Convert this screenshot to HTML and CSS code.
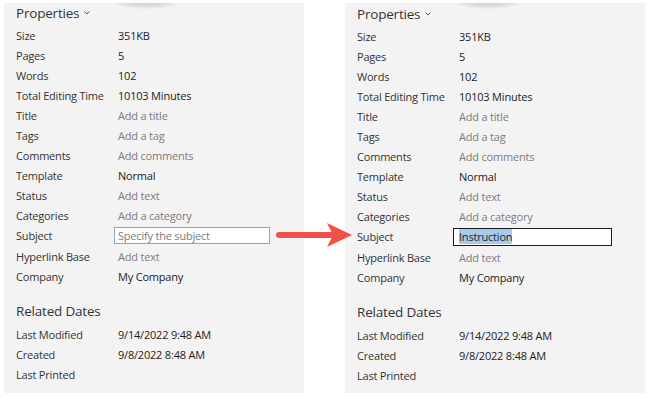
FILE: index.html
```html
<!DOCTYPE html>
<html lang="en">
<head>
    <meta charset="UTF-8">
    <title>Document Properties</title>
    <link rel="stylesheet" href="styles.css">
</head>
<body>
    <div class="page">
        <!-- before -->
        <section class="panel">
            <div class="smudge"></div>
            <h2 class="panel-title">Properties <svg class="caret" width="6" height="4" viewBox="0 0 6 4"><path d="M0.5 0.5 L3 3 L5.5 0.5" fill="none" stroke="#555" stroke-width="1"/></svg></h2>
            <div class="props">
                <div class="prop"><span class="label">Size</span><span class="value">351KB</span></div>
                <div class="prop"><span class="label">Pages</span><span class="value">5</span></div>
                <div class="prop"><span class="label">Words</span><span class="value">102</span></div>
                <div class="prop"><span class="label">Total Editing Time</span><span class="value">10103 Minutes</span></div>
                <div class="prop"><span class="label">Title</span><span class="value empty">Add a title</span></div>
                <div class="prop"><span class="label">Tags</span><span class="value empty">Add a tag</span></div>
                <div class="prop"><span class="label">Comments</span><span class="value empty">Add comments</span></div>
                <div class="prop"><span class="label">Template</span><span class="value">Normal</span></div>
                <div class="prop"><span class="label">Status</span><span class="value empty">Add text</span></div>
                <div class="prop"><span class="label">Categories</span><span class="value empty">Add a category</span></div>
                <div class="prop"><span class="label">Subject</span><span class="value"><span class="field hover empty">Specify the subject</span></span></div>
                <div class="prop"><span class="label">Hyperlink Base</span><span class="value empty">Add text</span></div>
                <div class="prop"><span class="label">Company</span><span class="value">My Company</span></div>
            </div>
            <h2 class="panel-title dates">Related Dates</h2>
            <div class="props">
                <div class="prop"><span class="label">Last Modified</span><span class="value">9/14/2022 9:48 AM</span></div>
                <div class="prop"><span class="label">Created</span><span class="value">9/8/2022 8:48 AM</span></div>
                <div class="prop"><span class="label">Last Printed</span><span class="value"></span></div>
            </div>
        </section>

        <!-- after -->
        <section class="panel after">
            <div class="smudge"></div>
            <h2 class="panel-title">Properties <svg class="caret" width="6" height="4" viewBox="0 0 6 4"><path d="M0.5 0.5 L3 3 L5.5 0.5" fill="none" stroke="#555" stroke-width="1"/></svg></h2>
            <div class="props">
                <div class="prop"><span class="label">Size</span><span class="value">351KB</span></div>
                <div class="prop"><span class="label">Pages</span><span class="value">5</span></div>
                <div class="prop"><span class="label">Words</span><span class="value">102</span></div>
                <div class="prop"><span class="label">Total Editing Time</span><span class="value">10103 Minutes</span></div>
                <div class="prop"><span class="label">Title</span><span class="value empty">Add a title</span></div>
                <div class="prop"><span class="label">Tags</span><span class="value empty">Add a tag</span></div>
                <div class="prop"><span class="label">Comments</span><span class="value empty">Add comments</span></div>
                <div class="prop"><span class="label">Template</span><span class="value">Normal</span></div>
                <div class="prop"><span class="label">Status</span><span class="value empty">Add text</span></div>
                <div class="prop"><span class="label">Categories</span><span class="value empty">Add a category</span></div>
                <div class="prop"><span class="label">Subject</span><span class="value"><span class="field active"><span class="selected">Instruction</span></span></span></div>
                <div class="prop"><span class="label">Hyperlink Base</span><span class="value empty">Add text</span></div>
                <div class="prop"><span class="label">Company</span><span class="value">My Company</span></div>
            </div>
            <h2 class="panel-title dates">Related Dates</h2>
            <div class="props">
                <div class="prop"><span class="label">Last Modified</span><span class="value">9/14/2022 9:48 AM</span></div>
                <div class="prop"><span class="label">Created</span><span class="value">9/8/2022 8:48 AM</span></div>
                <div class="prop"><span class="label">Last Printed</span><span class="value"></span></div>
            </div>
        </section>

        <svg class="arrow" width="80" height="26" viewBox="0 0 80 26">
            <line x1="4" y1="13" x2="60" y2="13" stroke="#f0524a" stroke-width="6" stroke-linecap="round"/>
            <path d="M52 1 L77 13 L52 25 L58 13 Z" fill="#f0524a"/>
        </svg>
    </div>
</body>
</html>
```

FILE: styles.css
```css
:root {
    --panel-bg: #f3f3f3;
    --label: #333;
    --value: #222;
    --placeholder: #7c7c7c;
}

* {
    margin: 0;
    padding: 0;
    box-sizing: border-box;
}

body {
    background: #fff;
    font-family: 'Open Sans', 'Noto Sans', sans-serif;
    font-size: 11px;
    letter-spacing: -0.2px;
    color: var(--value);
}

.page {
    position: relative;
    display: flex;
    gap: 41px;
    padding: 3px 0 0 4px;
}

.panel {
    position: relative;
    width: 300px;
    height: 390px;
    background: var(--panel-bg);
    padding: 0 0 0 12px;
    overflow: hidden;
}

.panel.after {
    padding-top: 1px;
}

.smudge {
    position: absolute;
    top: -10px;
    left: 108px;
    width: 70px;
    height: 16px;
    border-radius: 50%;
    background: radial-gradient(ellipse at center, #c9c9c9 0%, #dcdcdc 45%, rgba(243,243,243,0) 75%);
}

.panel-title {
    font-weight: normal;
    font-size: 13.5px;
    letter-spacing: -0.2px;
    color: #333;
    height: 22px;
    line-height: 20px;
}

.caret {
    margin-left: 1px;
    vertical-align: 3px;
}

.panel-title.dates {
    margin-top: 14px;
    height: 24px;
    line-height: 22px;
}

.props {
    display: flex;
    flex-direction: column;
}

.prop {
    display: grid;
    grid-template-columns: 102px 1fr;
    height: 20.1px;
    align-items: center;
}

.label {
    color: var(--label);
}

.value.empty,
.field.empty {
    color: var(--placeholder);
}

.field {
    display: block;
    height: 17px;
    line-height: 15px;
    background: #fff;
}

.field.hover {
    margin-left: -4px;
    width: 156px;
    padding-left: 3px;
    border: 1px solid #8aa7cc;
}

.field.active {
    margin-left: -6px;
    width: 159px;
    height: 18px;
    padding-left: 5px;
    border: 1.5px solid #1b1b1b;
}

.selected {
    background: #a9c9ee;
    color: #1f1f1f;
}

.arrow {
    position: absolute;
    left: 275px;
    top: 222px;
}
```
